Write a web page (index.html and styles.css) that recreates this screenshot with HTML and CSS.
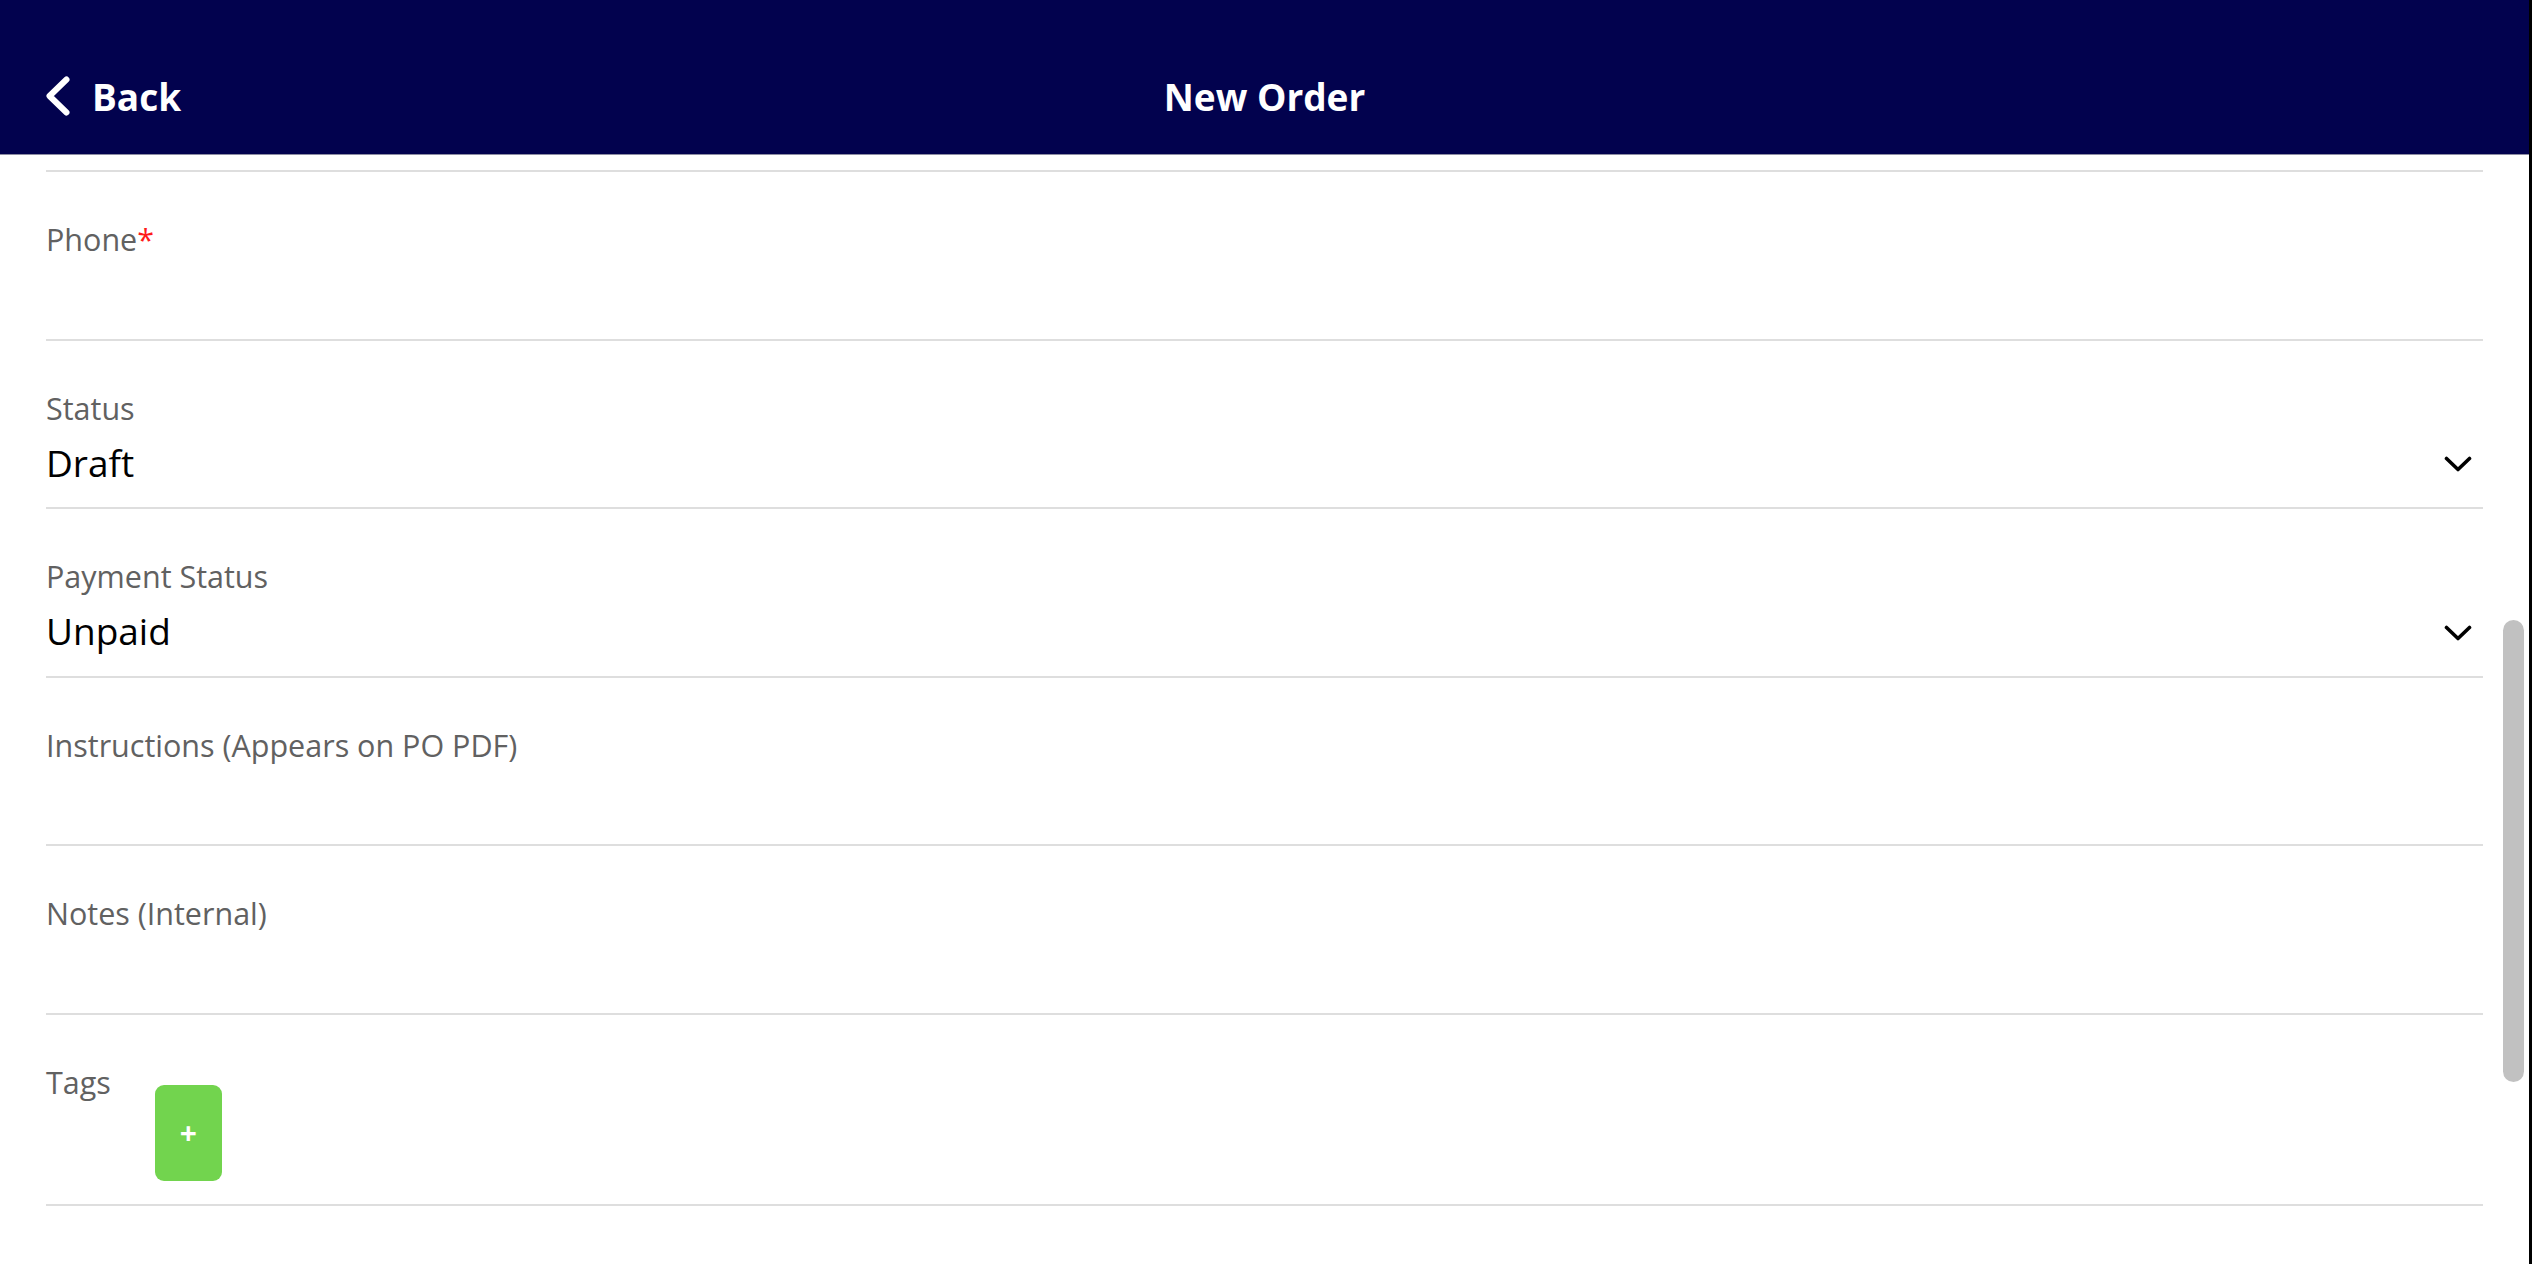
FILE: index.html
```html
<!DOCTYPE html>
<html lang="en">
<head>
  <meta charset="UTF-8" />
  <meta name="viewport" content="width=device-width, initial-scale=1.0"/>
  <title>New Order</title>
  <link rel="stylesheet" href="styles.css">
</head>
<body>

  <div class="app">

    <!-- Top bar -->
    <header class="topbar">
      <a class="back" href="#">
        <svg class="back-icon" width="26" height="42" viewBox="0 0 26 42">
          <path d="M21.5 4.5 L4.5 21 L21.5 37.5" fill="none" stroke="#fff" stroke-width="6" stroke-linecap="round" stroke-linejoin="round"/>
        </svg>
        <span>Back</span>
      </a>
      <h1>New Order</h1>
      <span></span>
    </header>

    <!-- Order form -->
    <main class="form">
      <div class="field">
        <label for="phone">Phone<span class="required">*</span></label>
        <input type="text" id="phone" class="field-input">
      </div>

      <div class="field">
        <label>Status</label>
        <div class="select-value">
          <span>Draft</span>
          <svg class="chevron" width="28" height="16" viewBox="0 0 28 16">
            <path d="M2.5 2.5 L14 13.5 L25.5 2.5" fill="none" stroke="#000" stroke-width="3.6" stroke-linecap="round" stroke-linejoin="round"/>
          </svg>
        </div>
      </div>

      <div class="field">
        <label>Payment Status</label>
        <div class="select-value">
          <span>Unpaid</span>
          <svg class="chevron" width="28" height="16" viewBox="0 0 28 16">
            <path d="M2.5 2.5 L14 13.5 L25.5 2.5" fill="none" stroke="#000" stroke-width="3.6" stroke-linecap="round" stroke-linejoin="round"/>
          </svg>
        </div>
      </div>

      <div class="field">
        <label for="instructions">Instructions (Appears on PO PDF)</label>
        <input type="text" id="instructions" class="field-input">
      </div>

      <div class="field">
        <label for="notes">Notes (Internal)</label>
        <input type="text" id="notes" class="field-input">
      </div>

      <div class="field field-tags">
        <label>Tags</label>
        <button class="add-tag" type="button">+</button>
      </div>
    </main>

    <!-- Scrollbar thumb -->
    <div class="scroll-thumb"></div>
  </div>

</body>
</html>
```

FILE: styles.css
```css
/* Base styles */
* {
  margin: 0;
  padding: 0;
  box-sizing: border-box;
}

body {
  background-color: #ffffff;
  font-family: 'Open Sans', 'Noto Sans', sans-serif;
  color: #000000;
  overflow: hidden;
}

.app {
  position: relative;
  min-height: 100vh;
  border-right: 3px solid #000000;
  background-color: #ffffff;
}

/* Topbar */
.topbar {
  height: 155px;
  padding-top: 38px;
  background-color: #02024e;
  border-bottom: 1px solid #8d8da3;
  display: grid;
  grid-template-columns: 1fr auto 1fr;
  align-items: center;
  color: #ffffff;
}

.back {
  display: flex;
  align-items: center;
  gap: 21px;
  padding-left: 45px;
  color: #ffffff;
  text-decoration: none;
  font-size: 37px;
  font-weight: 700;
}

.back-icon {
  display: block;
}

.topbar h1 {
  font-size: 37px;
  font-weight: 700;
}

/* Form */
.form {
  padding: 15px 46px 0 46px;
}

.field {
  padding: 46px 0 18.5px 0;
  border-bottom: 2px solid #dedede;
}

.field:first-child {
  border-top: 2px solid #dedede;
}

.field label {
  display: block;
  font-size: 30.5px;
  line-height: 43px;
  color: #616161;
}

.required {
  color: #ff1a1a;
}

.field-input {
  display: block;
  width: 100%;
  height: 52px;
  margin-top: 7px;
  border: none;
  outline: none;
  background: transparent;
  font-family: inherit;
  font-size: 37px;
  color: #000000;
}

.select-value {
  display: flex;
  justify-content: space-between;
  align-items: center;
  height: 52px;
  margin-top: 7px;
  font-size: 37px;
  line-height: 52px;
  color: #000000;
}

.chevron {
  display: block;
  margin-right: 11px;
  margin-top: 3px;
}

/* Tags */
.field-tags {
  display: flex;
  align-items: flex-start;
  padding-bottom: 23px;
}

.add-tag {
  width: 67px;
  height: 96px;
  margin-top: 24px;
  margin-left: 44px;
  border: none;
  border-radius: 9px;
  background-color: #72d44e;
  color: #ffffff;
  font-family: inherit;
  font-size: 30px;
  font-weight: 700;
  line-height: 1;
  cursor: pointer;
}

/* Scrollbar */
.scroll-thumb {
  position: absolute;
  top: 620px;
  right: 5px;
  width: 21px;
  height: 462px;
  border-radius: 11px;
  background-color: #c1c1c1;
}
```
